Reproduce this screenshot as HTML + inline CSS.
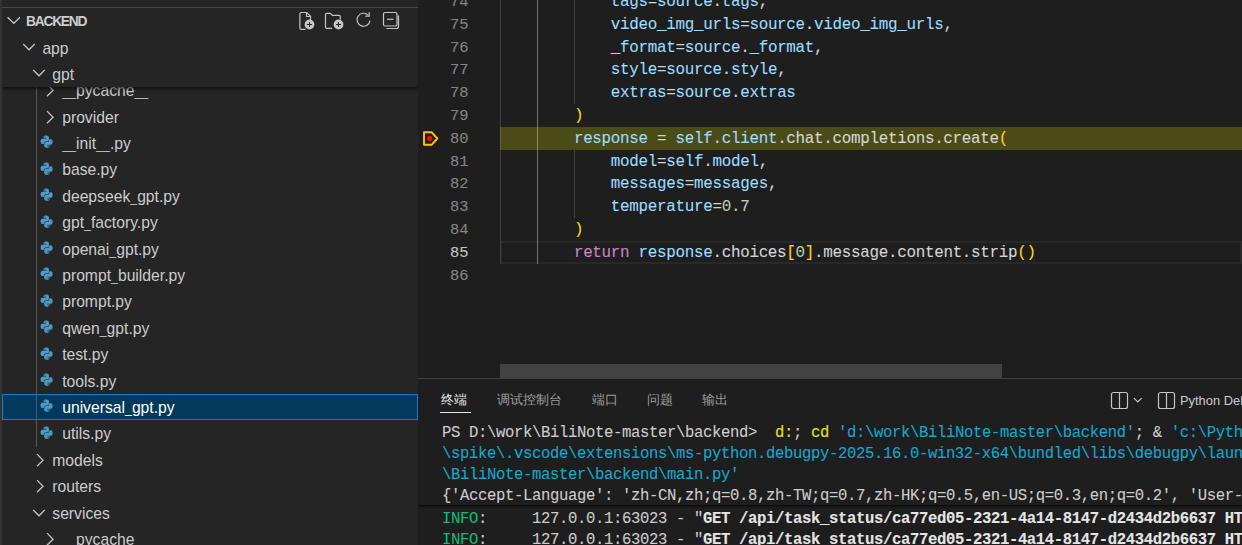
<!DOCTYPE html>
<html><head><meta charset="utf-8">
<style>
html,body{margin:0;padding:0;width:1242px;height:545px;overflow:hidden;background:#1e1e1e;position:relative}
div,span,svg{box-sizing:border-box}
.a{position:absolute}
#side{left:0;top:0;width:418px;height:545px;background:#252526;overflow:hidden}
.row{position:absolute;left:0;width:418px;height:26.4px;font-family:"Liberation Sans",sans-serif;font-size:15.7px;color:#cccccc;white-space:nowrap}
.row .t{position:absolute;top:0;line-height:26.4px}
.chev{position:absolute}
.py{position:absolute}
#editor{left:418px;top:0;width:824px;height:378px;background:#1e1e1e;overflow:hidden}
.ln{position:absolute;left:0;width:50.5px;text-align:right;font-family:"Liberation Mono",monospace;font-size:15.4px;line-height:22.8px;color:#858585;white-space:pre}
.cl{position:absolute;left:82px;font-family:"Liberation Mono",monospace;font-size:15.9px;letter-spacing:-0.3px;line-height:22.8px;color:#d4d4d4;white-space:pre}
.v{color:#9cdcfe}.w{color:#d4d4d4}.g{color:#ffd700}.k{color:#c586c0}.n{color:#b5cea8}
#panel{left:418px;top:378px;width:824px;height:167px;background:#1e1e1e;border-top:1px solid #404040;overflow:hidden}
#panel .w{color:#cccccc}
.tab{position:absolute;top:0;font-family:"Liberation Sans",sans-serif;font-size:13.35px;font-weight:500;line-height:42px;color:#9d9d9d;white-space:nowrap}
.tl{position:absolute;left:24px;font-family:"Liberation Mono",monospace;font-size:15.6px;letter-spacing:-0.36px;line-height:21px;color:#cccccc;white-space:pre}
.ye{color:#e5e510}.cy{color:#11a8cd}.gr{color:#0dbc79}.bw{color:#e5e5e5;font-weight:bold}
.u{font-size:12.4px}
.cl,.tl,.ln{-webkit-text-stroke:0.1px currentColor}

</style></head><body>
<div id="editor" class="a"><div class="a" style="left:82px;top:240.5px;width:742px;height:23.6px;border:2px solid #282828"></div><div class="a" style="left:82px;top:0px;width:1px;height:263.8px;background:#404040"></div><div class="a" style="left:119px;top:0px;width:1px;height:263.8px;background:#707070"></div><div class="a" style="left:156px;top:0px;width:1px;height:104.2px;background:#404040"></div><div class="a" style="left:156px;top:149.8px;width:1px;height:68.4px;background:#404040"></div><div class="a" style="left:82px;top:127.0px;width:742px;height:22.8px;background:rgba(255,255,0,0.2)"></div><div class="ln" style="top:-9.100000000000001px;color:#858585">74</div><div class="cl" style="top:-9.100000000000001px"><span class="w">            </span><span class="v">tags</span><span class="w">=</span><span class="v">source</span><span class="w">.</span><span class="v">tags</span><span class="w">,</span></div><div class="ln" style="top:13.7px;color:#858585">75</div><div class="cl" style="top:13.7px"><span class="w">            </span><span class="v">video_img_urls</span><span class="w">=</span><span class="v">source</span><span class="w">.</span><span class="v">video_img_urls</span><span class="w">,</span></div><div class="ln" style="top:36.5px;color:#858585">76</div><div class="cl" style="top:36.5px"><span class="w">            </span><span class="v">_format</span><span class="w">=</span><span class="v">source</span><span class="w">.</span><span class="v">_format</span><span class="w">,</span></div><div class="ln" style="top:59.300000000000004px;color:#858585">77</div><div class="cl" style="top:59.300000000000004px"><span class="w">            </span><span class="v">style</span><span class="w">=</span><span class="v">source</span><span class="w">.</span><span class="v">style</span><span class="w">,</span></div><div class="ln" style="top:82.10000000000001px;color:#858585">78</div><div class="cl" style="top:82.10000000000001px"><span class="w">            </span><span class="v">extras</span><span class="w">=</span><span class="v">source</span><span class="w">.</span><span class="v">extras</span></div><div class="ln" style="top:104.9px;color:#858585">79</div><div class="cl" style="top:104.9px"><span class="w">        </span><span class="g">)</span></div><div class="ln" style="top:127.7px;color:#858585">80</div><div class="cl" style="top:127.7px"><span class="w">        </span><span class="v">response</span><span class="w"> = </span><span class="v">self</span><span class="w">.</span><span class="v">client</span><span class="w">.chat.completions.create</span><span class="g">(</span></div><div class="ln" style="top:150.5px;color:#858585">81</div><div class="cl" style="top:150.5px"><span class="w">            </span><span class="v">model</span><span class="w">=</span><span class="v">self</span><span class="w">.</span><span class="v">model</span><span class="w">,</span></div><div class="ln" style="top:173.29999999999998px;color:#858585">82</div><div class="cl" style="top:173.29999999999998px"><span class="w">            </span><span class="v">messages</span><span class="w">=</span><span class="v">messages</span><span class="w">,</span></div><div class="ln" style="top:196.1px;color:#858585">83</div><div class="cl" style="top:196.1px"><span class="w">            </span><span class="v">temperature</span><span class="w">=</span><span class="n">0.7</span></div><div class="ln" style="top:218.89999999999998px;color:#858585">84</div><div class="cl" style="top:218.89999999999998px"><span class="w">        </span><span class="g">)</span></div><div class="ln" style="top:241.7px;color:#c6c6c6">85</div><div class="cl" style="top:241.7px"><span class="w">        </span><span class="k">return</span><span class="w"> </span><span class="v">response</span><span class="w">.choices</span><span class="g">[</span><span class="n">0</span><span class="g">]</span><span class="w">.message.content.strip</span><span class="g">()</span></div><div class="ln" style="top:264.5px;color:#858585">86</div><div class="cl" style="top:264.5px"></div><svg class="a" style="left:4px;top:130px" width="18" height="17" viewBox="0 0 18 17"><path d="M2 2.2h7.6l5.7 6.3-5.7 6.3H2z" fill="none" stroke="#fcc400" stroke-width="1.9" stroke-linejoin="round"/><circle cx="7.6" cy="8.5" r="2.7" fill="#e51400"/></svg><div class="a" style="left:82px;top:364px;width:502px;height:14px;background:#424242"></div></div>
<div id="panel" class="a"><div class="tab" style="left:23.30000000000001px;color:#e7e7e7">终端</div><div class="tab" style="left:79px;color:#9d9d9d">调试控制台</div><div class="tab" style="left:173.79999999999995px;color:#9d9d9d">端口</div><div class="tab" style="left:229px;color:#9d9d9d">问题</div><div class="tab" style="left:284px;color:#9d9d9d">输出</div><div class="a" style="left:22px;top:32.5px;width:31px;height:1px;background:#e7e7e7"></div><svg class="a" style="left:690px;top:11.2px" width="134" height="20" viewBox="0 0 134 20" fill="none" stroke="#c5c5c5" stroke-width="1.2"><rect x="3.5" y="2.5" width="16" height="16" rx="2"/><path d="M11.5 2.5v16"/><path d="M26 8.2l3.8 3.8 3.8-3.8"/><rect x="50.5" y="2.5" width="16" height="16" rx="2"/><path d="M58.5 2.5v16"/></svg><div class="a" style="left:762px;top:1px;height:42px;line-height:42px;font-family:'Liberation Sans',sans-serif;font-size:12.9px;color:#cccccc;white-space:nowrap">Python Debug Console</div><div class="a" style="left:0;top:38px;width:824px;height:126px;background:#1e1e1e"></div><div class="tl" style="top:130px;"><span class="gr">INFO</span><span class="w">:     127.0.0.1:63023 - &quot;</span><span class="bw">GET /api/task_status/ca77ed05-2321-4a14-8147-d2434d2b6637 HTTP/1.1</span></div><div class="tl" style="top:150.79999999999995px;"><span class="gr">INFO</span><span class="w">:     127.0.0.1:63023 - &quot;</span><span class="bw">GET /api/task_status/ca77ed05-2321-4a14-8147-d2434d2b6637 HTTP/1.1</span></div><div class="a" style="left:0;top:38px;width:824px;height:89px;background:#1e1e1e;border-bottom:1.5px solid #0c0c0c;box-shadow:0 1px 2px rgba(0,0,0,0.4)"></div><div class="tl" style="top:43.80000000000001px;"><span class="w">PS D:\work\BiliNote-master\backend&gt;  </span><span class="ye">d:</span><span class="w">; </span><span class="ye">cd</span><span class="w"> </span><span class="cy">&#x27;d:\work\BiliNote-master\backend&#x27;</span><span class="w">; &amp; </span><span class="cy">&#x27;c:\Python312\python.exe&#x27;</span></div><div class="tl" style="top:64.80000000000001px;"><span class="cy">\spike\.vscode\extensions\ms-python.debugpy-2025.16.0-win32-x64\bundled\libs\debugpy\launcher</span></div><div class="tl" style="top:85.80000000000001px;"><span class="cy">\BiliNote-master\backend\main.py&#x27;</span></div><div class="tl" style="top:106.80000000000001px;"><span class="w">{&#x27;Accept-Language&#x27;: &#x27;zh-CN,zh;q=0.8,zh-TW;q=0.7,zh-HK;q=0.5,en-US;q=0.3,en;q=0.2&#x27;, &#x27;User-Agent&#x27;</span></div></div>
<div id="side" class="a"><div class="a" style="left:2px;top:7px;width:416px;height:1px;background:#474748"></div><svg class="a" style="left:6px;top:14px" width="16" height="13" viewBox="0 0 16 13"><path d="M1.6 3.3 L7.8 9.3 L14 3.3" fill="none" stroke="#c5c5c5" stroke-width="1.25"/></svg><div class="a" style="left:26px;top:8.8px;height:26px;line-height:26px;font-family:'Liberation Sans',sans-serif;font-weight:bold;font-size:13.8px;letter-spacing:-1.25px;color:#cccccc">BACKEND</div><div class="row" style="top:77.6px;"><svg class="chev" style="left:44.6px;top:5.6px" width="10" height="14" viewBox="0 0 10 14"><path d="M2 1.1 L8.1 7.2 L2 13.3" fill="none" stroke="#c5c5c5" stroke-width="1.25"/></svg><span class="t" style="left:62.2px;top:0.6px"><span class="u">_</span><span class="u">_</span>pycache<span class="u">_</span><span class="u">_</span></span></div><div class="row" style="top:104.0px;"><svg class="chev" style="left:44.6px;top:5.6px" width="10" height="14" viewBox="0 0 10 14"><path d="M2 1.1 L8.1 7.2 L2 13.3" fill="none" stroke="#c5c5c5" stroke-width="1.25"/></svg><span class="t" style="left:62.2px;top:0.6px">provider</span></div><div class="row" style="top:130.4px;"><svg class="py" style="left:38.9px;top:5.0px" width="15.2" height="15.2" viewBox="0 0 16 16"><defs></defs><g fill="#4f9bc6"><path id="ph" d="M6.7 0.6H8.3Q10.5 0.6 10.5 2.8V4.8Q10.5 6.8 8.5 6.8H6.9Q5.1 6.8 5.1 8.6V9.5H3.7Q1.7 9.5 1.7 7.4V6Q1.7 3.9 3.8 3.9H7.8V3.4H4.8V2.5Q4.8 0.6 6.7 0.6Z"/><path transform="rotate(180 8 7.05)" d="M6.7 0.6H8.3Q10.5 0.6 10.5 2.8V4.8Q10.5 6.8 8.5 6.8H6.9Q5.1 6.8 5.1 8.6V9.5H3.7Q1.7 9.5 1.7 7.4V6Q1.7 3.9 3.8 3.9H7.8V3.4H4.8V2.5Q4.8 0.6 6.7 0.6Z"/></g><circle cx="6.3" cy="2.1" r=".6" fill="#252526"/><circle cx="9.7" cy="12" r=".6" fill="#252526"/></svg><span class="t" style="left:62.2px;top:0.6px"><span class="u">_</span><span class="u">_</span>init<span class="u">_</span><span class="u">_</span>.py</span></div><div class="row" style="top:156.8px;"><svg class="py" style="left:38.9px;top:5.0px" width="15.2" height="15.2" viewBox="0 0 16 16"><defs></defs><g fill="#4f9bc6"><path id="ph" d="M6.7 0.6H8.3Q10.5 0.6 10.5 2.8V4.8Q10.5 6.8 8.5 6.8H6.9Q5.1 6.8 5.1 8.6V9.5H3.7Q1.7 9.5 1.7 7.4V6Q1.7 3.9 3.8 3.9H7.8V3.4H4.8V2.5Q4.8 0.6 6.7 0.6Z"/><path transform="rotate(180 8 7.05)" d="M6.7 0.6H8.3Q10.5 0.6 10.5 2.8V4.8Q10.5 6.8 8.5 6.8H6.9Q5.1 6.8 5.1 8.6V9.5H3.7Q1.7 9.5 1.7 7.4V6Q1.7 3.9 3.8 3.9H7.8V3.4H4.8V2.5Q4.8 0.6 6.7 0.6Z"/></g><circle cx="6.3" cy="2.1" r=".6" fill="#252526"/><circle cx="9.7" cy="12" r=".6" fill="#252526"/></svg><span class="t" style="left:62.2px;top:0.6px">base.py</span></div><div class="row" style="top:183.2px;"><svg class="py" style="left:38.9px;top:5.0px" width="15.2" height="15.2" viewBox="0 0 16 16"><defs></defs><g fill="#4f9bc6"><path id="ph" d="M6.7 0.6H8.3Q10.5 0.6 10.5 2.8V4.8Q10.5 6.8 8.5 6.8H6.9Q5.1 6.8 5.1 8.6V9.5H3.7Q1.7 9.5 1.7 7.4V6Q1.7 3.9 3.8 3.9H7.8V3.4H4.8V2.5Q4.8 0.6 6.7 0.6Z"/><path transform="rotate(180 8 7.05)" d="M6.7 0.6H8.3Q10.5 0.6 10.5 2.8V4.8Q10.5 6.8 8.5 6.8H6.9Q5.1 6.8 5.1 8.6V9.5H3.7Q1.7 9.5 1.7 7.4V6Q1.7 3.9 3.8 3.9H7.8V3.4H4.8V2.5Q4.8 0.6 6.7 0.6Z"/></g><circle cx="6.3" cy="2.1" r=".6" fill="#252526"/><circle cx="9.7" cy="12" r=".6" fill="#252526"/></svg><span class="t" style="left:62.2px;top:0.6px">deepseek<span class="u">_</span>gpt.py</span></div><div class="row" style="top:209.6px;"><svg class="py" style="left:38.9px;top:5.0px" width="15.2" height="15.2" viewBox="0 0 16 16"><defs></defs><g fill="#4f9bc6"><path id="ph" d="M6.7 0.6H8.3Q10.5 0.6 10.5 2.8V4.8Q10.5 6.8 8.5 6.8H6.9Q5.1 6.8 5.1 8.6V9.5H3.7Q1.7 9.5 1.7 7.4V6Q1.7 3.9 3.8 3.9H7.8V3.4H4.8V2.5Q4.8 0.6 6.7 0.6Z"/><path transform="rotate(180 8 7.05)" d="M6.7 0.6H8.3Q10.5 0.6 10.5 2.8V4.8Q10.5 6.8 8.5 6.8H6.9Q5.1 6.8 5.1 8.6V9.5H3.7Q1.7 9.5 1.7 7.4V6Q1.7 3.9 3.8 3.9H7.8V3.4H4.8V2.5Q4.8 0.6 6.7 0.6Z"/></g><circle cx="6.3" cy="2.1" r=".6" fill="#252526"/><circle cx="9.7" cy="12" r=".6" fill="#252526"/></svg><span class="t" style="left:62.2px;top:0.6px">gpt<span class="u">_</span>factory.py</span></div><div class="row" style="top:236.0px;"><svg class="py" style="left:38.9px;top:5.0px" width="15.2" height="15.2" viewBox="0 0 16 16"><defs></defs><g fill="#4f9bc6"><path id="ph" d="M6.7 0.6H8.3Q10.5 0.6 10.5 2.8V4.8Q10.5 6.8 8.5 6.8H6.9Q5.1 6.8 5.1 8.6V9.5H3.7Q1.7 9.5 1.7 7.4V6Q1.7 3.9 3.8 3.9H7.8V3.4H4.8V2.5Q4.8 0.6 6.7 0.6Z"/><path transform="rotate(180 8 7.05)" d="M6.7 0.6H8.3Q10.5 0.6 10.5 2.8V4.8Q10.5 6.8 8.5 6.8H6.9Q5.1 6.8 5.1 8.6V9.5H3.7Q1.7 9.5 1.7 7.4V6Q1.7 3.9 3.8 3.9H7.8V3.4H4.8V2.5Q4.8 0.6 6.7 0.6Z"/></g><circle cx="6.3" cy="2.1" r=".6" fill="#252526"/><circle cx="9.7" cy="12" r=".6" fill="#252526"/></svg><span class="t" style="left:62.2px;top:0.6px">openai<span class="u">_</span>gpt.py</span></div><div class="row" style="top:262.4px;"><svg class="py" style="left:38.9px;top:5.0px" width="15.2" height="15.2" viewBox="0 0 16 16"><defs></defs><g fill="#4f9bc6"><path id="ph" d="M6.7 0.6H8.3Q10.5 0.6 10.5 2.8V4.8Q10.5 6.8 8.5 6.8H6.9Q5.1 6.8 5.1 8.6V9.5H3.7Q1.7 9.5 1.7 7.4V6Q1.7 3.9 3.8 3.9H7.8V3.4H4.8V2.5Q4.8 0.6 6.7 0.6Z"/><path transform="rotate(180 8 7.05)" d="M6.7 0.6H8.3Q10.5 0.6 10.5 2.8V4.8Q10.5 6.8 8.5 6.8H6.9Q5.1 6.8 5.1 8.6V9.5H3.7Q1.7 9.5 1.7 7.4V6Q1.7 3.9 3.8 3.9H7.8V3.4H4.8V2.5Q4.8 0.6 6.7 0.6Z"/></g><circle cx="6.3" cy="2.1" r=".6" fill="#252526"/><circle cx="9.7" cy="12" r=".6" fill="#252526"/></svg><span class="t" style="left:62.2px;top:0.6px">prompt<span class="u">_</span>builder.py</span></div><div class="row" style="top:288.8px;"><svg class="py" style="left:38.9px;top:5.0px" width="15.2" height="15.2" viewBox="0 0 16 16"><defs></defs><g fill="#4f9bc6"><path id="ph" d="M6.7 0.6H8.3Q10.5 0.6 10.5 2.8V4.8Q10.5 6.8 8.5 6.8H6.9Q5.1 6.8 5.1 8.6V9.5H3.7Q1.7 9.5 1.7 7.4V6Q1.7 3.9 3.8 3.9H7.8V3.4H4.8V2.5Q4.8 0.6 6.7 0.6Z"/><path transform="rotate(180 8 7.05)" d="M6.7 0.6H8.3Q10.5 0.6 10.5 2.8V4.8Q10.5 6.8 8.5 6.8H6.9Q5.1 6.8 5.1 8.6V9.5H3.7Q1.7 9.5 1.7 7.4V6Q1.7 3.9 3.8 3.9H7.8V3.4H4.8V2.5Q4.8 0.6 6.7 0.6Z"/></g><circle cx="6.3" cy="2.1" r=".6" fill="#252526"/><circle cx="9.7" cy="12" r=".6" fill="#252526"/></svg><span class="t" style="left:62.2px;top:0.6px">prompt.py</span></div><div class="row" style="top:315.2px;"><svg class="py" style="left:38.9px;top:5.0px" width="15.2" height="15.2" viewBox="0 0 16 16"><defs></defs><g fill="#4f9bc6"><path id="ph" d="M6.7 0.6H8.3Q10.5 0.6 10.5 2.8V4.8Q10.5 6.8 8.5 6.8H6.9Q5.1 6.8 5.1 8.6V9.5H3.7Q1.7 9.5 1.7 7.4V6Q1.7 3.9 3.8 3.9H7.8V3.4H4.8V2.5Q4.8 0.6 6.7 0.6Z"/><path transform="rotate(180 8 7.05)" d="M6.7 0.6H8.3Q10.5 0.6 10.5 2.8V4.8Q10.5 6.8 8.5 6.8H6.9Q5.1 6.8 5.1 8.6V9.5H3.7Q1.7 9.5 1.7 7.4V6Q1.7 3.9 3.8 3.9H7.8V3.4H4.8V2.5Q4.8 0.6 6.7 0.6Z"/></g><circle cx="6.3" cy="2.1" r=".6" fill="#252526"/><circle cx="9.7" cy="12" r=".6" fill="#252526"/></svg><span class="t" style="left:62.2px;top:0.6px">qwen<span class="u">_</span>gpt.py</span></div><div class="row" style="top:341.6px;"><svg class="py" style="left:38.9px;top:5.0px" width="15.2" height="15.2" viewBox="0 0 16 16"><defs></defs><g fill="#4f9bc6"><path id="ph" d="M6.7 0.6H8.3Q10.5 0.6 10.5 2.8V4.8Q10.5 6.8 8.5 6.8H6.9Q5.1 6.8 5.1 8.6V9.5H3.7Q1.7 9.5 1.7 7.4V6Q1.7 3.9 3.8 3.9H7.8V3.4H4.8V2.5Q4.8 0.6 6.7 0.6Z"/><path transform="rotate(180 8 7.05)" d="M6.7 0.6H8.3Q10.5 0.6 10.5 2.8V4.8Q10.5 6.8 8.5 6.8H6.9Q5.1 6.8 5.1 8.6V9.5H3.7Q1.7 9.5 1.7 7.4V6Q1.7 3.9 3.8 3.9H7.8V3.4H4.8V2.5Q4.8 0.6 6.7 0.6Z"/></g><circle cx="6.3" cy="2.1" r=".6" fill="#252526"/><circle cx="9.7" cy="12" r=".6" fill="#252526"/></svg><span class="t" style="left:62.2px;top:0.6px">test.py</span></div><div class="row" style="top:368.0px;"><svg class="py" style="left:38.9px;top:5.0px" width="15.2" height="15.2" viewBox="0 0 16 16"><defs></defs><g fill="#4f9bc6"><path id="ph" d="M6.7 0.6H8.3Q10.5 0.6 10.5 2.8V4.8Q10.5 6.8 8.5 6.8H6.9Q5.1 6.8 5.1 8.6V9.5H3.7Q1.7 9.5 1.7 7.4V6Q1.7 3.9 3.8 3.9H7.8V3.4H4.8V2.5Q4.8 0.6 6.7 0.6Z"/><path transform="rotate(180 8 7.05)" d="M6.7 0.6H8.3Q10.5 0.6 10.5 2.8V4.8Q10.5 6.8 8.5 6.8H6.9Q5.1 6.8 5.1 8.6V9.5H3.7Q1.7 9.5 1.7 7.4V6Q1.7 3.9 3.8 3.9H7.8V3.4H4.8V2.5Q4.8 0.6 6.7 0.6Z"/></g><circle cx="6.3" cy="2.1" r=".6" fill="#252526"/><circle cx="9.7" cy="12" r=".6" fill="#252526"/></svg><span class="t" style="left:62.2px;top:0.6px">tools.py</span></div><div class="a" style="left:2px;top:394.4px;width:416px;height:26px;background:#04395e;border:1px solid #007fd4"></div><div class="row" style="top:394.4px;color:#ffffff"><svg class="py" style="left:38.9px;top:5.0px" width="15.2" height="15.2" viewBox="0 0 16 16"><defs></defs><g fill="#4f9bc6"><path id="ph" d="M6.7 0.6H8.3Q10.5 0.6 10.5 2.8V4.8Q10.5 6.8 8.5 6.8H6.9Q5.1 6.8 5.1 8.6V9.5H3.7Q1.7 9.5 1.7 7.4V6Q1.7 3.9 3.8 3.9H7.8V3.4H4.8V2.5Q4.8 0.6 6.7 0.6Z"/><path transform="rotate(180 8 7.05)" d="M6.7 0.6H8.3Q10.5 0.6 10.5 2.8V4.8Q10.5 6.8 8.5 6.8H6.9Q5.1 6.8 5.1 8.6V9.5H3.7Q1.7 9.5 1.7 7.4V6Q1.7 3.9 3.8 3.9H7.8V3.4H4.8V2.5Q4.8 0.6 6.7 0.6Z"/></g><circle cx="6.3" cy="2.1" r=".6" fill="#252526"/><circle cx="9.7" cy="12" r=".6" fill="#252526"/></svg><span class="t" style="left:62.2px;top:0.6px">universal<span class="u">_</span>gpt.py</span></div><div class="row" style="top:420.8px;"><svg class="py" style="left:38.9px;top:5.0px" width="15.2" height="15.2" viewBox="0 0 16 16"><defs></defs><g fill="#4f9bc6"><path id="ph" d="M6.7 0.6H8.3Q10.5 0.6 10.5 2.8V4.8Q10.5 6.8 8.5 6.8H6.9Q5.1 6.8 5.1 8.6V9.5H3.7Q1.7 9.5 1.7 7.4V6Q1.7 3.9 3.8 3.9H7.8V3.4H4.8V2.5Q4.8 0.6 6.7 0.6Z"/><path transform="rotate(180 8 7.05)" d="M6.7 0.6H8.3Q10.5 0.6 10.5 2.8V4.8Q10.5 6.8 8.5 6.8H6.9Q5.1 6.8 5.1 8.6V9.5H3.7Q1.7 9.5 1.7 7.4V6Q1.7 3.9 3.8 3.9H7.8V3.4H4.8V2.5Q4.8 0.6 6.7 0.6Z"/></g><circle cx="6.3" cy="2.1" r=".6" fill="#252526"/><circle cx="9.7" cy="12" r=".6" fill="#252526"/></svg><span class="t" style="left:62.2px;top:0.6px">utils.py</span></div><div class="row" style="top:447.2px;"><svg class="chev" style="left:34.6px;top:5.6px" width="10" height="14" viewBox="0 0 10 14"><path d="M2 1.1 L8.1 7.2 L2 13.3" fill="none" stroke="#c5c5c5" stroke-width="1.25"/></svg><span class="t" style="left:52.3px;top:0.6px">models</span></div><div class="row" style="top:473.6px;"><svg class="chev" style="left:34.6px;top:5.6px" width="10" height="14" viewBox="0 0 10 14"><path d="M2 1.1 L8.1 7.2 L2 13.3" fill="none" stroke="#c5c5c5" stroke-width="1.25"/></svg><span class="t" style="left:52.3px;top:0.6px">routers</span></div><div class="row" style="top:500.0px;"><svg class="chev" style="left:32.0px;top:7.6px" width="14" height="10" viewBox="0 0 14 10"><path d="M1.2 2 L7 7.8 L12.8 2" fill="none" stroke="#c5c5c5" stroke-width="1.25"/></svg><span class="t" style="left:52.3px;top:0.6px">services</span></div><div class="row" style="top:526.4px;"><svg class="chev" style="left:44.6px;top:5.6px" width="10" height="14" viewBox="0 0 10 14"><path d="M2 1.1 L8.1 7.2 L2 13.3" fill="none" stroke="#c5c5c5" stroke-width="1.25"/></svg><span class="t" style="left:62.2px;top:0.6px"><span class="u">_</span><span class="u">_</span>pycache<span class="u">_</span><span class="u">_</span></span></div><div class="a" style="left:36px;top:87px;width:1px;height:360.2px;background:#585858"></div><div class="a" style="left:2px;top:34.4px;width:416px;height:52.8px;background:#252526;box-shadow:0 3px 3px -1px rgba(0,0,0,0.6)"></div><div class="row" style="top:34.4px;"><svg class="chev" style="left:22.0px;top:7.6px" width="14" height="10" viewBox="0 0 14 10"><path d="M1.2 2 L7 7.8 L12.8 2" fill="none" stroke="#c5c5c5" stroke-width="1.25"/></svg><span class="t" style="left:42.4px;top:1.3px">app</span></div><div class="row" style="top:60.8px;"><svg class="chev" style="left:32.0px;top:7.6px" width="14" height="10" viewBox="0 0 14 10"><path d="M1.2 2 L7 7.8 L12.8 2" fill="none" stroke="#c5c5c5" stroke-width="1.25"/></svg><span class="t" style="left:52.3px;top:1.4px">gpt</span></div><svg class="a" style="left:296px;top:10px" width="110" height="22" viewBox="0 0 110 22" fill="none" stroke="#c5c5c5" stroke-width="1.2"><path d="M9.6 19.3H5.2a1.3 1.3 0 0 1-1.3-1.3V3.8a1.3 1.3 0 0 1 1.3-1.3h5.5l3.8 3.8v3.6"/><path d="M10.5 2.6v3.9h3.9"/><circle cx="13.5" cy="14.5" r="4.9" fill="#c5c5c5" stroke="none"/><path d="M13.5 12v5M11 14.5h5" stroke="#252526" stroke-width="1"/><path d="M36.2 18.4h-5.4a1.3 1.3 0 0 1-1.3-1.3V4.6a1.3 1.3 0 0 1 1.3-1.3h3.6l2 2h6.6a1.3 1.3 0 0 1 1.3 1.3v2.9"/><circle cx="42.5" cy="14.5" r="4.9" fill="#c5c5c5" stroke="none"/><path d="M42.5 12v5M40 14.5h5" stroke="#252526" stroke-width="1"/><path d="M72.2 5.2A6.5 6.5 0 1 0 74 10.5"/><path d="M73.2 2.2v3.9h-3.9"/><rect x="87.5" y="2.5" width="13.5" height="13.5" rx="1.5"/><path d="M102.5 5.5v11a2 2 0 0 1-2 2h-10"/><path d="M91 9.3h6.5"/></svg><div class="a" style="left:0;top:0;width:2px;height:545px;background:#333333"></div></div>
</body></html>
